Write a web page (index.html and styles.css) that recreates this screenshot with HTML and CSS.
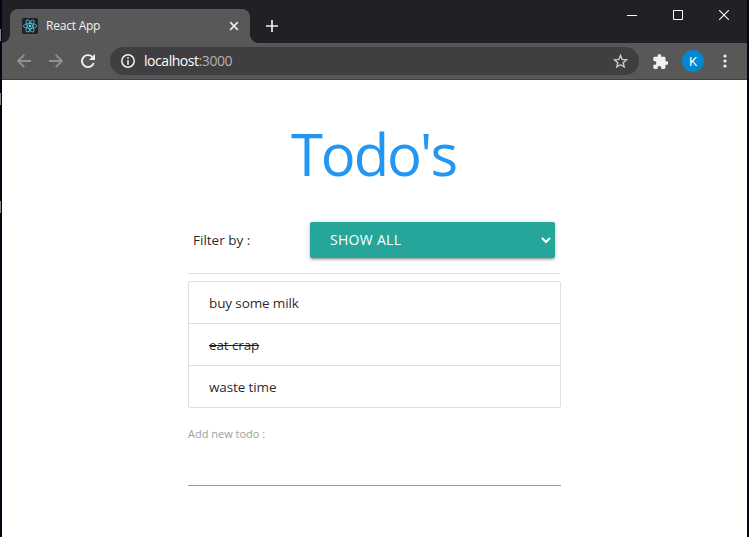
FILE: index.html
```html
<!DOCTYPE html>
<html lang="en">
<head>
<meta charset="utf-8">
<title>React App</title>
<link rel="stylesheet" href="styles.css">
</head>
<body>
<div class="window">
  <header class="tabstrip">
    <div class="tab">
      <svg class="favicon" width="16" height="16" viewBox="0 0 16 16"><rect width="16" height="16" rx="1.5" fill="#20232a"/><g fill="none" stroke="#53b5cf" stroke-width=".9"><ellipse cx="8" cy="8" rx="6.6" ry="2.5"/><ellipse cx="8" cy="8" rx="6.6" ry="2.5" transform="rotate(60 8 8)"/><ellipse cx="8" cy="8" rx="6.6" ry="2.5" transform="rotate(120 8 8)"/></g><circle cx="8" cy="8" r="1.3" fill="#61dafb"/></svg>
      <span class="tab-title">React App</span>
      <svg class="tab-close" width="10" height="10" viewBox="0 0 10 10"><path d="M1.2 1.2l7.6 7.6M8.800 1.200L1.200 8.800" stroke="#e8e8e8" stroke-width="1.7"/></svg>
    </div>
    <svg class="new-tab" width="12" height="12" viewBox="0 0 12 12"><path d="M6 0v12M0 6h12" stroke="#eee" stroke-width="1.7"/></svg>
    <div class="controls">
      <svg width="10" height="10" viewBox="0 0 10 10"><path d="M0 5.5h10" stroke="#fff"/></svg>
      <svg width="10" height="10" viewBox="0 0 10 10"><path d="M.5.5h9v9h-9z" fill="none" stroke="#fff"/></svg>
      <svg width="10" height="10" viewBox="0 0 10 10"><path d="M0 0l10 10M10 0L0 10" stroke="#fff" stroke-width="1.1"/></svg>
    </div>
  </header>
  <nav class="toolbar">
    <svg class="back" width="14" height="14" viewBox="0 0 14 14"><path d="M14 7H1.300M7.300.8L1.100 7l6.200 6.200" fill="none" stroke="#919191" stroke-width="1.8"/></svg>
    <svg class="forward" width="14" height="14" viewBox="0 0 14 14"><path d="M0 7h12.700M6.700.8L12.900 7l-6.200 6.200" fill="none" stroke="#919191" stroke-width="1.8"/></svg>
    <svg class="reload" width="14" height="14" viewBox="0 0 14 14"><path d="M12.700 9A6 6 0 1 1 11.200 2.800" fill="none" stroke="#f1f1f1" stroke-width="1.9"/><path d="M14 0v6H8z" fill="#f1f1f1"/></svg>
    <div class="address">
      <svg width="14" height="14" viewBox="0 0 14 14"><circle cx="7" cy="7" r="6.200" fill="none" stroke="#f1f1f1" stroke-width="1.5"/><path d="M7 3.200v1.600M7 6.200v4.500" stroke="#f1f1f1" stroke-width="1.6"/></svg>
      <span class="url">localhost<span class="port">:3000</span></span>
      <svg class="star" width="15" height="14" viewBox="0 0 15 14"><path d="M7.500 1.400l1.700 4 4.300.4-3.300 2.900 1 4.200-3.700-2.200-3.700 2.200 1-4.200-3.300-2.900 4.300-.4z" fill="none" stroke="#c9c9c9" stroke-width="1.4"/></svg>
    </div>
    <svg class="puzzle" width="15" height="15" viewBox="1.500 1 21 21"><path d="M20.500 11H19V7a2 2 0 0 0-2-2h-4V3.500a2.500 2.500 0 0 0-5 0V5H4a2 2 0 0 0-2 2v3.800h1.500a2.700 2.700 0 0 1 0 5.400H2V20a2 2 0 0 0 2 2h3.800v-1.500a2.700 2.700 0 0 1 5.400 0V22H17a2 2 0 0 0 2-2v-4h1.500a2.500 2.500 0 0 0 0-5z" fill="#f1f1f1"/></svg>
    <span class="avatar">K</span>
    <svg class="menu" width="4" height="14" viewBox="0 0 4 14" fill="#f1f1f1"><circle cx="2" cy="2" r="1.600"/><circle cx="2" cy="7" r="1.600"/><circle cx="2" cy="12" r="1.600"/></svg>
  </nav>
  <main class="page">
    <h1>Todo's</h1>
    <div class="filter">
      <span class="filter-label">Filter by :</span>
      <div class="select"><span>SHOW ALL</span><svg width="10" height="7" viewBox="0 0 10 7"><path d="M1 1l4 4 4-4" fill="none" stroke="#fff" stroke-width="2"/></svg></div>
    </div>
    <ul class="todos">
      <li><span>buy some milk</span></li>
      <li><span class="done">eat crap</span></li>
      <li><span>waste time</span></li>
    </ul>
    <label for="new-todo">Add new todo :</label>
    <input id="new-todo" type="text">
  </main>
</div>
</body>
</html>
```
FILE: styles.css
```css
* { box-sizing: border-box; }
body { margin: 0; background: linear-gradient(#85858b, #85858b) 0 29px / 1px 12px no-repeat, linear-gradient(#85858b, #85858b) 0 93px / 1px 12px no-repeat, linear-gradient(#85858b, #85858b) 0 201px / 1px 12px no-repeat, #050516; font-family: "Open Sans", sans-serif; overflow: hidden; }
svg { display: block; flex: none; }
.window { width: 745px; height: 537px; margin-left: 2px; background: #fff; }
.tabstrip { height: 43px; background: #202124; display: flex; padding: 9px 18px 0 8px; }
.tab { position: relative; width: 240px; height: 34px; background: #585858; border-radius: 8px 8px 0 0; display: flex; align-items: center; padding: 0 11px 0 12px; }
.tab::before, .tab::after { content: ""; position: absolute; bottom: 0; width: 8px; height: 8px; }
.tab::before { left: -8px; background: radial-gradient(circle at 0 0, #202124 7.5px, #585858 8px); }
.tab::after { right: -8px; background: radial-gradient(circle at 100% 0, #202124 7.5px, #585858 8px); }
.tab-title { margin: -2px 0 0 8px; font-size: 12px; letter-spacing: -.22px; color: #f1f1f1; }
.tab-close { margin-left: auto; }
.new-tab { margin: 11px 0 0 16px; }
.controls { display: flex; gap: 36px; margin: 1px 0 0 auto; }
.toolbar { height: 37px; background: #585858; border-bottom: 1px solid #444144; display: flex; align-items: center; padding: 0 20px 0 15px; }
.forward { margin-left: 18px; }
.reload { margin-left: 18px; }
.address { width: 529px; height: 28px; margin-left: 15px; border-radius: 14px; background: #403e41; display: flex; align-items: center; padding: 0 11px; }
.url { margin: -1px 0 0 9px; font-size: 14px; letter-spacing: -.45px; color: #fff; }
.port { color: #b2b1b3; }
.star { margin-left: auto; }
.puzzle { margin-left: 14px; }
.avatar { width: 22px; height: 22px; margin-left: 14px; border-radius: 50%; background: #0288d1; color: #fff; font-family: Roboto, sans-serif; font-size: 13px; line-height: 23px; text-align: center; }
.menu { margin-left: auto; }
.page { width: 373px; margin-left: 186px; color: rgba(0, 0, 0, .87); }
h1 { margin: 0; padding-top: 35px; height: 142px; font-size: 58px; line-height: 78px; font-weight: 400; letter-spacing: -2.1px; text-indent: -2px; text-align: center; color: #2196f3; }
.filter { width: 372px; height: 52px; border-bottom: 1px solid #e0e0e0; display: flex; align-items: flex-start; padding-left: 5px; }
.filter-label { width: 117px; font-size: 13.5px; line-height: 36px; }
.select { width: 245px; height: 36px; border-radius: 2px; background: #26a69a; color: #fff; display: flex; align-items: center; justify-content: space-between; padding: 0 4px 0 20px; font-size: 14px; letter-spacing: .3px; box-shadow: 0 2px 2px rgba(0,0,0,.14), 0 3px 1px -2px rgba(0,0,0,.12), 0 1px 5px rgba(0,0,0,.2); }
.select span { margin-top: -2px; }
.todos { list-style: none; margin: 7px 0 0; padding: 0; border: 1px solid #e0e0e0; border-radius: 2px; }
.todos li { height: 42px; padding-left: 20px; font-size: 13.5px; letter-spacing: -.12px; line-height: 42px; border-bottom: 1px solid #e0e0e0; }
.todos li:last-child { height: 41px; border-bottom: 0; }
.done { text-decoration: line-through; }
label { display: block; margin-top: 18px; font-size: 11px; line-height: 16px; color: #9e9e9e; }
input { display: block; width: 100%; height: 44px; border: 0; border-bottom: 1px solid #9e9e9e; outline: 0; padding: 0; background: transparent; }
```
